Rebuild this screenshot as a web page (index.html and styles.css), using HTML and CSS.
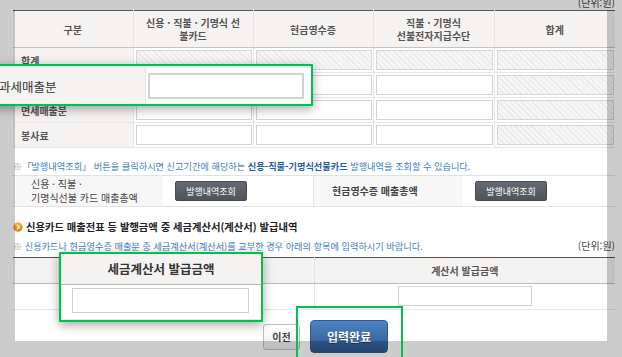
FILE: index.html
```html
<!DOCTYPE html>
<html lang="ko">
<head>
<meta charset="utf-8">
<title>카드매출</title>
<link rel="stylesheet" href="styles.css">
</head>
<body>
<div class="page">
  <div class="unit-top">(단위:원)</div>
  <table class="grid">
    <colgroup><col class="w120"><col class="w120"><col class="w120"><col class="w121"><col class="w121"></colgroup>
    <thead>
      <tr><th>구분</th><th>신용 · 직불 · 기명식 선<br>불카드</th><th>현금영수증</th><th>직불 · 기명식<br>선불전자지급수단</th><th>합계</th></tr>
    </thead>
    <tbody>
      <tr><td class="lbl">합계</td><td><input class="inp dis" type="text"></td><td><input class="inp dis" type="text"></td><td><input class="inp dis" type="text"></td><td><input class="inp dis" type="text"></td></tr>
      <tr><td class="lbl">과세매출분</td><td><input class="inp" type="text"></td><td><input class="inp" type="text"></td><td><input class="inp" type="text"></td><td><input class="inp dis" type="text"></td></tr>
      <tr><td class="lbl">면세매출분</td><td><input class="inp" type="text"></td><td><input class="inp" type="text"></td><td><input class="inp" type="text"></td><td><input class="inp dis" type="text"></td></tr>
      <tr><td class="lbl">봉사료</td><td><input class="inp" type="text"></td><td><input class="inp" type="text"></td><td><input class="inp" type="text"></td><td><input class="inp dis" type="text"></td></tr>
    </tbody>
  </table>

  <p class="note note1"><span class="mark">※</span>「발행내역조회」 버튼을 클릭하시면 신고기간에 해당하는 <b>신용-직불-기명식선불카드</b> 발행내역을 조회할 수 있습니다.</p>

  <div class="totals">
    <div class="tlabel">신용 · 직불 ·<br>기명식선불 카드 매출총액</div>
    <div class="tbtn"><button class="btn-dark" type="button">발행내역조회</button></div>
    <div class="tlabel strong">현금영수증 매출총액</div>
    <div class="tbtn"><button class="btn-dark" type="button">발행내역조회</button></div>
  </div>

  <h3 class="sec">
    <svg class="bullet" width="10" height="10" viewBox="0 0 10 10"><defs><linearGradient id="og" x1="0" y1="0" x2="0" y2="1"><stop offset="0" stop-color="#f8b23c"/><stop offset="1" stop-color="#e07800"/></linearGradient></defs><circle cx="5" cy="5" r="4.7" fill="url(#og)"/><path d="M4 2.8 L6.2 5 L4 7.2" fill="none" stroke="#fff" stroke-width="1.4"/></svg>
    신용카드 매출전표 등 발행금액 중 세금계산서(계산서) 발급내역
  </h3>

  <div class="note-row">
    <p class="note"><span class="mark">※</span> 신용카드나 현금영수증 매출분 중 세금계산서(계산서)를 교부한 경우 아래의 항목에 입력하시기 바랍니다.</p>
    <span class="unit">(단위:원)</span>
  </div>

  <table class="grid grid2">
    <colgroup><col class="half"><col class="half"></colgroup>
    <thead><tr><th>세금계산서 발급금액</th><th>계산서 발급금액</th></tr></thead>
    <tbody><tr><td class="ctr"><input class="inp mid" type="text"></td><td class="ctr"><input class="inp mid" type="text"></td></tr></tbody>
  </table>

  <div class="actions">
    <button class="btn-prev" type="button">이전</button>
    <button class="btn-done" type="button">입력완료</button>
  </div>
</div>

<div class="spotlight"></div>

<div class="callout c-row">
  <div class="c-row-in">
    <div class="c-lbl">과세매출분</div>
    <div class="c-cell"><input class="c-inp" type="text"></div>
  </div>
</div>

<div class="callout c-col">
  <div class="c-head">세금계산서 발급금액</div>
  <div class="c-body"><input class="c-inp2" type="text"></div>
</div>

<div class="c-outline"></div>
</body>
</html>
```
FILE: styles.css
```css
* { box-sizing: border-box; }
html, body { margin: 0; padding: 0; }
html { width: 622px; height: 357px; overflow: hidden; }
body {
  width: 622px;
  height: 357px;
  overflow: hidden;
  background: #fff;
  font-family: "Noto Sans CJK KR", "Noto Sans", sans-serif;
  color: #444;
  position: relative;
}
.page { padding: 0 7px 0 13px; }

.unit-top {
  height: 10px;
  font-size: 10px;
  line-height: 6px;
  text-align: right;
  color: #444;
  overflow: hidden;
}

.grid {
  width: 602px;
  border-collapse: collapse;
  table-layout: fixed;
  border-top: 1px solid #555;
}
.w120 { width: 120px; }
.w121 { width: 121px; }
.half { width: 301px; }
.grid th {
  height: 37px;
  padding: 0;
  background: #f4f3f1;
  font-size: 10px;
  line-height: 13px;
  font-weight: bold;
  color: #555;
  border-bottom: 1px solid #c4c4c4;
  border-left: 1px solid #e6e5e3;
  text-align: center;
}
.grid th:first-child { border-left: 0; }
.grid td {
  height: 25px;
  padding: 2px 1px 2px 2px;
  border-bottom: 1px solid #e6e6e6;
  border-left: 1px solid #e6e6e6;
  vertical-align: middle;
}
.grid td.lbl {
  border-left: 0;
  background: #f4f3f1;
  padding-left: 8px;
  font-size: 10px;
  font-weight: bold;
  color: #555;
}
.inp {
  display: block;
  width: 100%;
  height: 20px;
  margin: 0;
  padding: 0;
  border: 1px solid #d2d2d2;
  background: #fff;
}
.inp.dis {
  background: repeating-linear-gradient(45deg, #e9e9e9 0 1px, #f5f5f5 1px 4px);
  border-color: #d6d6d6;
}

.note {
  margin: 0;
  font-size: 9.2px;
  line-height: 14px;
  color: #3b80c4;
  white-space: nowrap;
}
.note b { color: #1d5fa6; }
.note .mark { color: #9a9a9a; }
.note1 { margin-top: 11px; height: 16px; }

.totals {
  display: grid;
  grid-template-columns: 150px 150px 150px 152px;
  height: 32px;
  border-top: 1px solid #e2e2e2;
  border-bottom: 1px solid #e2e2e2;
}
.tlabel {
  background: #f7f7f7;
  padding-left: 18px;
  display: flex;
  align-items: center;
  font-size: 10px;
  line-height: 14px;
  color: #444;
}
.tlabel.strong { font-weight: bold; border-left: 1px solid #e8e8e8; }
.tbtn { display: flex; align-items: center; padding-left: 12px; }
.btn-dark {
  width: 72px;
  height: 20px;
  padding: 0;
  border: 1px solid #474b52;
  border-radius: 2px;
  background: linear-gradient(#646972, #50545b);
  color: #fff;
  font-family: inherit;
  font-size: 9px;
}

.sec {
  margin: 13px 0 0;
  display: flex;
  align-items: center;
  gap: 3px;
  font-size: 10.3px;
  line-height: 14px;
  font-weight: bold;
  color: #222;
}
.bullet { display: block; }

.note-row {
  margin-top: 5px;
  display: flex;
  justify-content: space-between;
  align-items: center;
  height: 14px;
}
.unit { font-size: 10px; color: #444; line-height: 14px; }

.grid2 { margin-top: 4px; }
.grid2 th { height: 26px; border-bottom-color: #bdbdbd; }
.grid2 td { height: 26px; padding: 2px 0 3px; }
.grid2 td:first-child { border-left: 0; }
.inp.mid { width: 134px; margin: 0 auto; }

.actions {
  margin-top: 10px;
  padding-left: 250px;
  display: flex;
  align-items: center;
  gap: 10px;
}
.btn-prev {
  width: 37px;
  height: 26px;
  padding: 0;
  border: 1px solid #bdbdbd;
  border-radius: 3px;
  background: linear-gradient(#ffffff, #ececec);
  color: #444;
  font-family: inherit;
  font-size: 10px;
  font-weight: bold;
}
.btn-done {
  width: 78px;
  height: 33px;
  padding: 0;
  border: 1px solid #2f5b93;
  border-radius: 4px;
  background: linear-gradient(#4f83c4, #2d5990);
  color: #fff;
  font-family: inherit;
  font-size: 12px;
  font-weight: bold;
  text-shadow: 0 1px 1px rgba(0,0,0,0.4);
}

/* dim overlay with a bright window */
.spotlight {
  position: absolute;
  left: 15px;
  top: 10px;
  width: 592px;
  height: 331px;
  box-shadow: 0 0 0 1000px rgba(0,0,0,0.2);
  pointer-events: none;
}

.callout {
  position: absolute;
  border: 2px solid #00c050;
  box-shadow: 0 3px 10px rgba(0,0,0,0.35);
  background: #fff;
}
.c-row {
  left: -12px;
  top: 64px;
  width: 325px;
  height: 42px;
}
.c-row-in {
  display: flex;
  height: 100%;
  border-top: 2px solid #ececec;
}
.c-lbl {
  width: 156px;
  background: #f4f3f1;
  padding-left: 9px;
  display: flex;
  align-items: center;
  font-size: 12.5px;
  color: #333;
  border-right: 1px solid #e2e2e2;
}
.c-cell { flex: 1; padding: 5px 0 0 2px; }
.c-inp {
  display: block;
  width: 156px;
  height: 26px;
  margin: 0;
  border: 2px solid #d2d2d2;
  background: #fff;
}

.c-col {
  left: 59px;
  top: 252px;
  width: 204px;
  height: 70px;
}
.c-head {
  height: 31px;
  background: #f4f3f1;
  border-bottom: 1px solid #b8b8b8;
  text-align: center;
  font-size: 12.5px;
  line-height: 30px;
  font-weight: bold;
  color: #333;
}
.c-body {
  height: 35px;
  padding: 3px 0 0 11px;
  border-bottom: 1px solid #e6e6e6;
}
.c-inp2 {
  display: block;
  width: 177px;
  height: 25px;
  margin: 0;
  border: 1px solid #cfcfcf;
  background: #fff;
}

.c-outline {
  position: absolute;
  left: 296px;
  top: 306px;
  width: 107px;
  height: 53px;
  border: 2px solid #00c050;
}
```
